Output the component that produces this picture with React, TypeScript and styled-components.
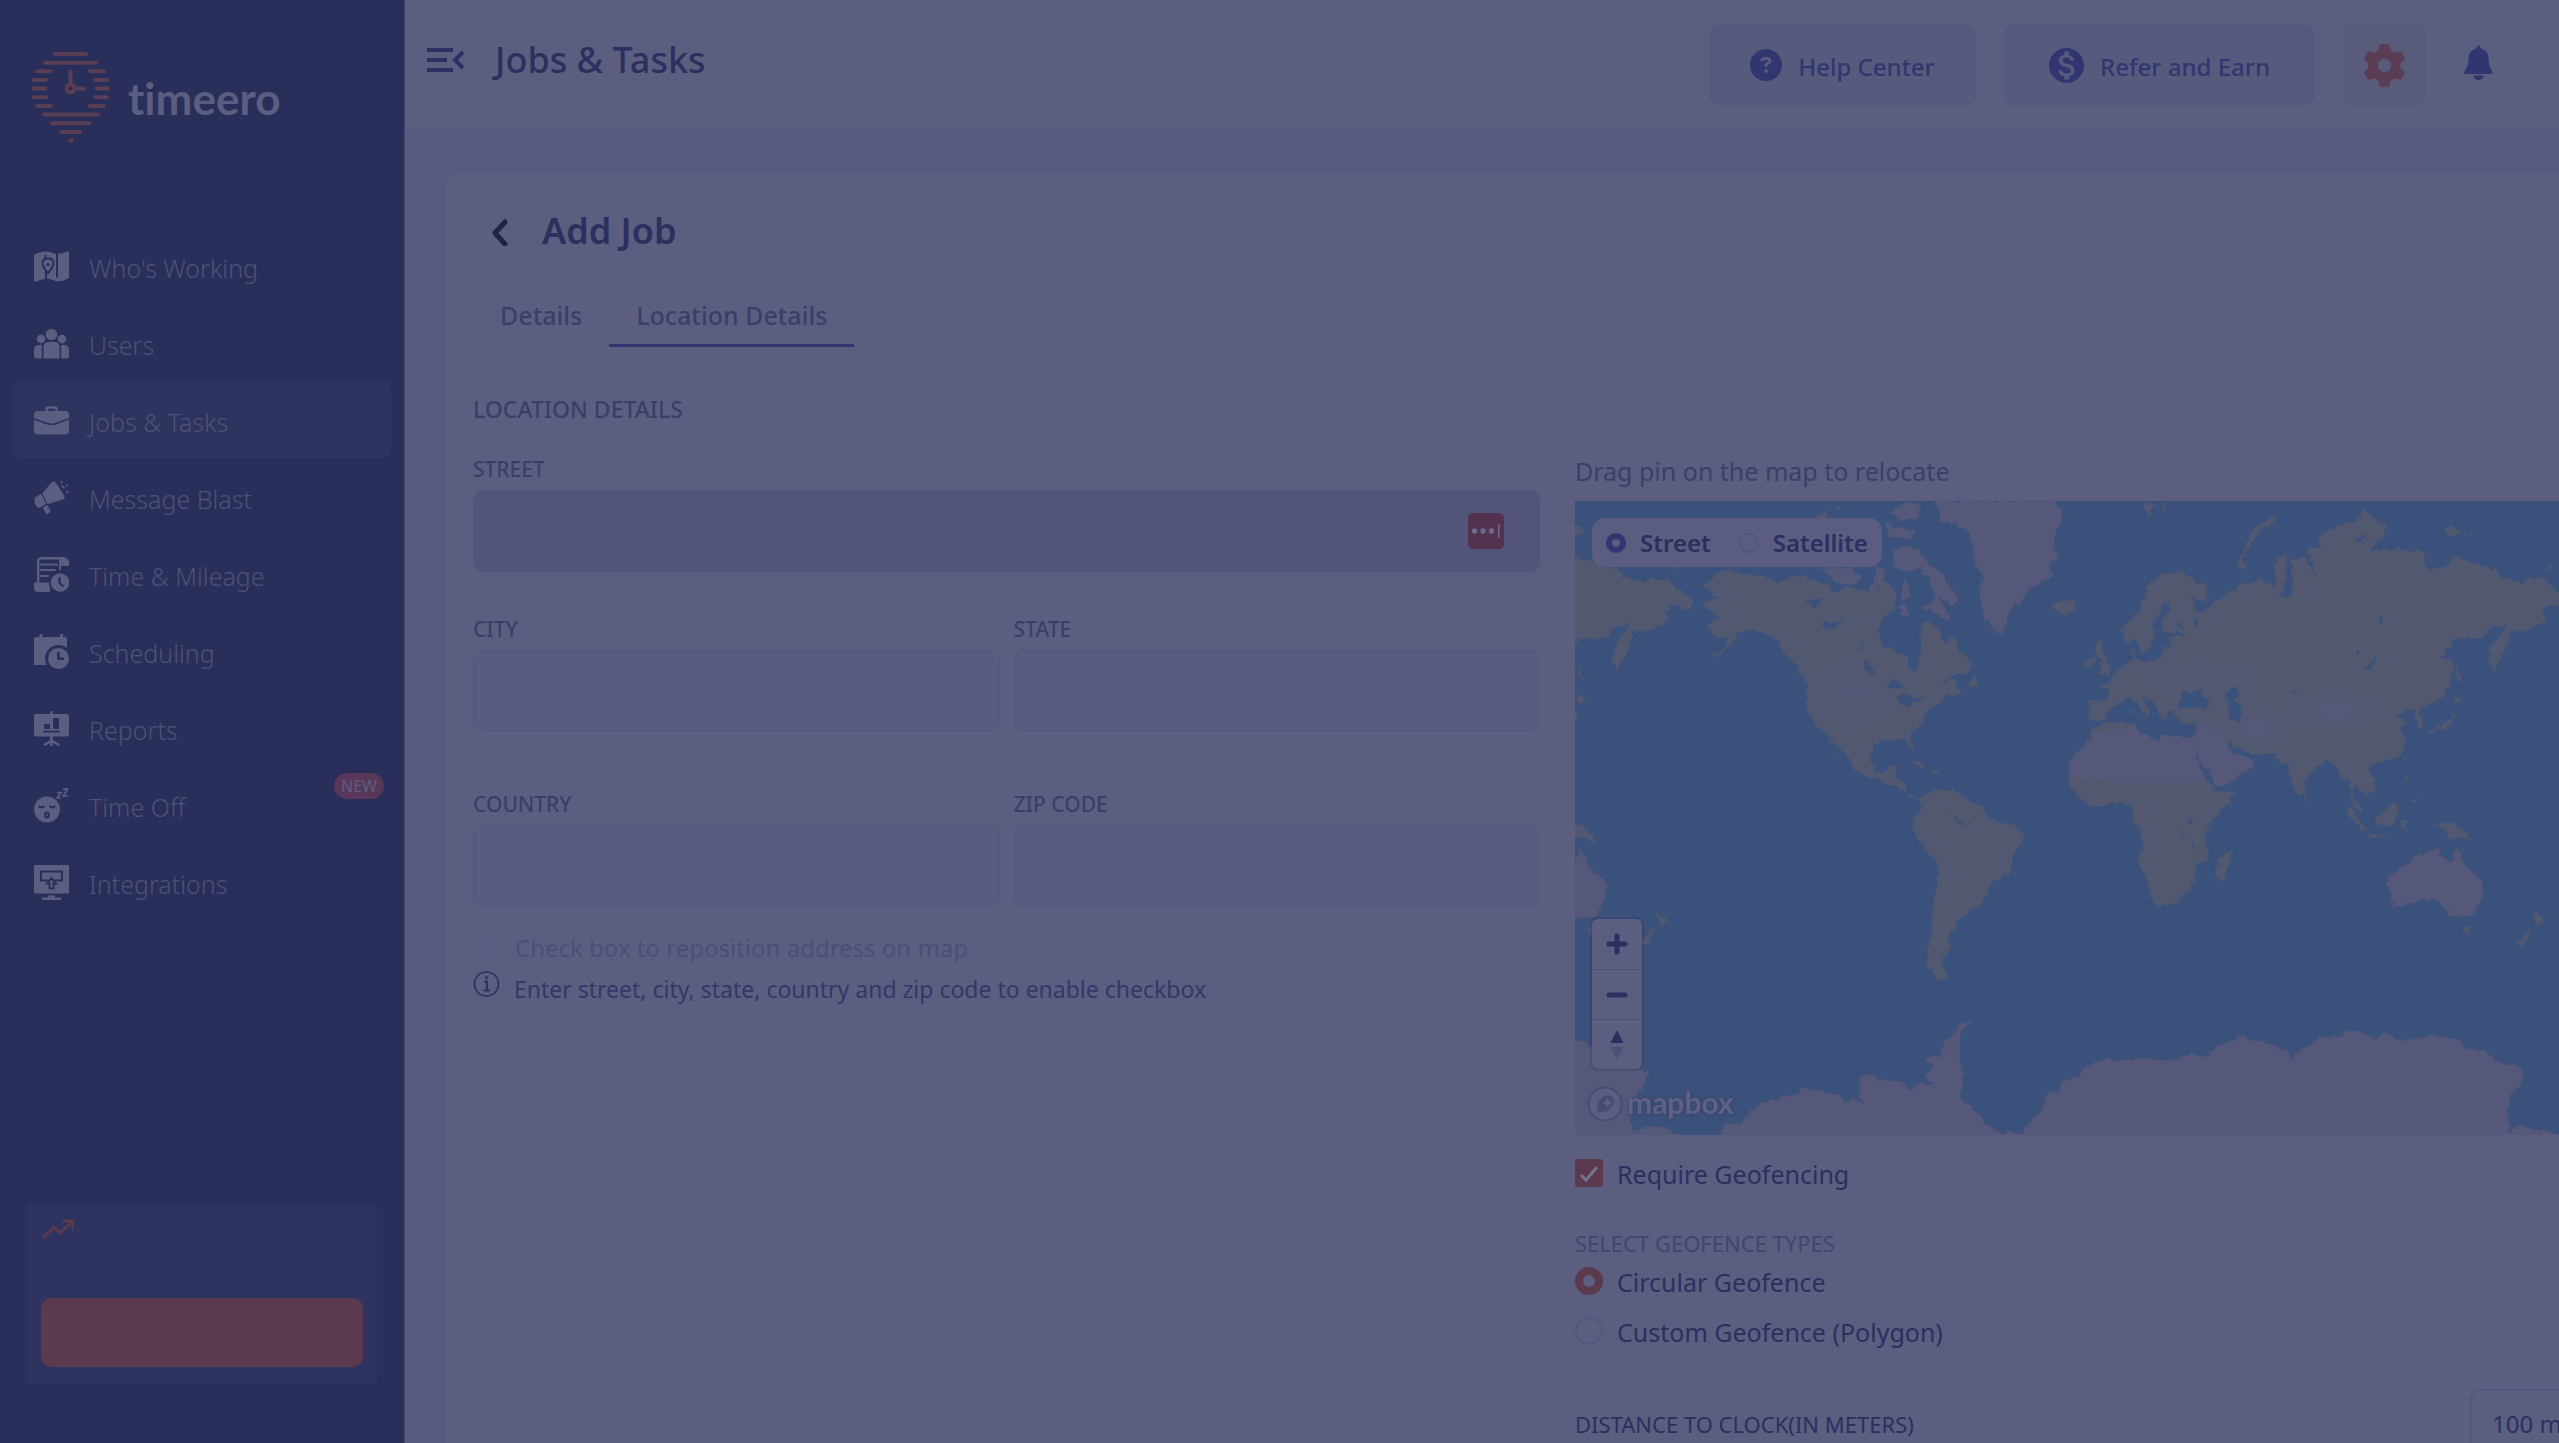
import React, { useState } from 'react';
import styled, { createGlobalStyle } from 'styled-components';
import { FaGear, FaCircleQuestion } from 'react-icons/fa6';
import { MdMonetizationOn } from 'react-icons/md';

const c = {
  sidebar: '#2a2e5a',
  sidebarActive: '#2f335f',
  sidebarEdge: '#43476c',
  sidebarText: '#4e5277',
  sidebarIcon: '#5b5e81',
  surface: '#5b5e7f',
  canvas: '#585b7f',
  field: '#595c7f',
  fieldBorder: '#56597e',
  fieldFocus: '#525579',
  ink: '#2c2f60',
  label: '#3b3e69',
  body: '#34376a',
  muted: '#4b4e77',
  accent: '#323670',
  orange: '#5c3a4d',
  water: '#3a517b',
  land: '#525870',
  sand: '#565879',
};

const GlobalStyle = createGlobalStyle`
  * { box-sizing: border-box; }
  body { margin: 0; background: ${c.canvas}; overflow: hidden; }
  body, button, input, select {
    font-family: "Noto Sans", "Open Sans", sans-serif;
    font-size: 24px;
    line-height: 32px;
  }
  button { border: 0; padding: 0; background: none; cursor: pointer; }
  svg { display: block; flex: none; }
`;

const Page = styled.div`
  display: flex;
  height: 100vh;
  overflow: hidden;
`;

/* ---------- Sidebar ---------- */

const Sidebar = styled.aside`
  display: flex;
  flex-direction: column;
  flex: none;
  width: 405px;
  background: ${c.sidebar};
  border-right: 1px solid ${c.sidebarEdge};
`;

const Brand = styled.a`
  display: flex;
  align-items: flex-start;
  gap: 18px;
  height: 227px;
  padding: 50px 0 0 31px;
  color: ${c.sidebarIcon};
  text-decoration: none;
`;

const BrandName = styled.span`
  padding-top: 18px;
  font-family: Lato, sans-serif;
  font-size: 44px;
  line-height: 60px;
  font-weight: 700;
  font-variant-ligatures: none;
`;

const Nav = styled.nav`
  display: flex;
  flex-direction: column;
  padding: 0 13px;
`;

const NavItem = styled.a<{ $active?: boolean }>`
  position: relative;
  display: flex;
  align-items: center;
  gap: 20px;
  height: 77px;
  padding: 2px 0 0 21px;
  border-radius: 6px;
  color: ${c.sidebarText};
  background: ${(p) => (p.$active ? c.sidebarActive : 'transparent')};
  text-decoration: none;

  svg { color: ${c.sidebarIcon}; }
`;

const NavLabel = styled.span`
  padding-top: 3px;
  font-size: 25px;
  font-weight: 300;
`;

const NewBadge = styled.span`
  position: absolute;
  top: 7px;
  right: 7px;
  padding: 0 7px;
  border-radius: 13px;
  background: #593759;
  color: ${c.sidebarIcon};
  font-size: 16px;
  line-height: 26px;
`;

const Promo = styled.section`
  display: flex;
  flex-direction: column;
  justify-content: space-between;
  height: 181px;
  margin: auto 27px 59px;
  padding: 16px 14px 17px;
  border-radius: 6px;
  background: ${c.sidebarActive};
`;

const PromoButton = styled.button`
  height: 69px;
  border-radius: 10px;
  background: ${c.orange};
`;

/* ---------- Header ---------- */

const Main = styled.main`
  display: flex;
  flex-direction: column;
  flex: 1;
  min-width: 0;
`;

const Header = styled.header`
  display: flex;
  align-items: center;
  justify-content: space-between;
  flex: none;
  height: 130px;
  padding: 0 66px 0 22px;
  background: ${c.surface};
`;

const HeaderSide = styled.div`
  display: flex;
  align-items: center;
  gap: 28px;
`;

const MenuButton = styled.button`
  padding-bottom: 4px;
  color: ${c.ink};
`;

const PageTitle = styled.h1`
  margin: 0;
  padding-bottom: 10px;
  color: ${c.ink};
  font-size: 36px;
  line-height: 48px;
  font-weight: 500;
`;

const PillLink = styled.a<{ $width: number }>`
  display: flex;
  align-items: center;
  justify-content: center;
  gap: 16px;
  width: ${(p) => p.$width}px;
  height: 84px;
  border-radius: 12px;
  background: #585a7d;
  color: ${c.accent};
  font-weight: 500;
  text-decoration: none;
`;

const PillLabel = styled.span`
  padding-top: 3px;
`;

const GearButton = styled.button`
  display: grid;
  place-items: center;
  width: 83px;
  height: 84px;
  border-radius: 12px;
  background: #595b7a;
  color: #5a3d55;
`;

const BellButton = styled.button`
  padding: 0 0 6px 10px;
  color: ${c.accent};
`;

/* ---------- Card ---------- */

const Card = styled.section`
  flex: 1;
  min-height: 0;
  margin: 43px 0 0 40px;
  padding: 34px 0 0 28px;
  border-top-left-radius: 10px;
  background: ${c.surface};
`;

const CardHeading = styled.div`
  display: flex;
  align-items: center;
  gap: 32px;
  padding-left: 17px;
`;

const BackButton = styled.button`
  color: #1f2245;
`;

const CardTitle = styled.h2`
  margin: 0;
  color: ${c.ink};
  font-size: 36px;
  line-height: 48px;
  font-weight: 600;
`;

const Tabs = styled.div`
  display: flex;
  margin-top: 28px;
`;

const Tab = styled.button<{ $active?: boolean }>`
  height: 64px;
  padding: 2px 27px 0;
  border-bottom: 3px solid ${(p) => (p.$active ? c.accent : 'transparent')};
  color: ${c.label};
  font-size: 25px;
  font-weight: 500;
`;

const SectionTitle = styled.h3`
  margin: 46px 0 28px;
  color: ${c.label};
  font-size: 23px;
  line-height: 32px;
  font-weight: 500;
`;

const Columns = styled.div`
  display: grid;
  grid-template-columns: minmax(0, 1067fr) minmax(0, 984fr);
  gap: 35px;
`;

const Fields = styled.div`
  display: grid;
  grid-template-columns: 1fr 1fr;
  gap: 0 14px;
  align-content: start;
`;

const Field = styled.div<{ $wide?: boolean; $after?: number }>`
  position: relative;
  display: flex;
  flex-direction: column;
  gap: 5px;
  grid-column: ${(p) => (p.$wide ? '1 / -1' : 'auto')};
  margin-bottom: ${(p) => p.$after ?? 0}px;
`;

const FieldLabel = styled.label`
  color: ${c.label};
  font-size: 21px;
  line-height: 32px;
  font-weight: 500;
`;

const TextInput = styled.input<{ $focused?: boolean }>`
  width: 100%;
  height: 82px;
  padding: 0 24px;
  border: 2px solid ${(p) => (p.$focused ? c.fieldFocus : c.fieldBorder)};
  border-radius: 10px;
  background: ${(p) => (p.$focused ? c.fieldFocus : c.field)};
  color: ${c.ink};
  outline: 0;
`;

const VaultBadge = styled.span`
  position: absolute;
  right: 36px;
  bottom: 23px;
`;

const Hint = styled.div`
  display: flex;
  gap: 14px;
  grid-column: 1 / -1;
  height: 38px;
  margin-top: 5px;
  color: ${c.body};

  svg { color: ${c.ink}; }
`;

const HintText = styled.p`
  align-self: flex-end;
  margin: 0;
  font-size: 23px;
  line-height: 34px;
`;

const Choice = styled.label<{ $before?: number; $wide?: boolean; $color?: string }>`
  display: flex;
  align-items: center;
  gap: 14px;
  grid-column: ${(p) => (p.$wide ? '1 / -1' : 'auto')};
  margin-top: ${(p) => p.$before ?? 0}px;
  color: ${(p) => p.$color ?? c.ink};
  font-size: ${(p) => (p.$wide ? 24 : 25)}px;
`;

const ChoiceText = styled.span`
  padding-top: 2px;
  line-height: 30px;
`;

const CheckBox = styled.input`
  appearance: none;
  flex: none;
  width: 28px;
  height: 28px;
  margin: 0;
  border-radius: 3px;
  background: #5a5c80;

  &:checked {
    background: ${c.orange}
      url("data:image/svg+xml,%3Csvg xmlns='http://www.w3.org/2000/svg' viewBox='0 0 28 28'%3E%3Cpath d='M6 16l5 5L22 8' fill='none' stroke='%2373738f' stroke-width='3'/%3E%3C/svg%3E");
  }
`;

const Radio = styled.input<{ $size: number; $tone: string }>`
  appearance: none;
  flex: none;
  width: ${(p) => p.$size}px;
  height: ${(p) => p.$size}px;
  margin: 0;
  border: 2px solid #54577d;
  border-radius: 50%;

  &:checked { border: ${(p) => (p.$size > 24 ? 8 : 6)}px solid ${(p) => p.$tone}; }
`;

const RightColumn = styled.div`
  display: flex;
  flex-direction: column;
  min-width: 0;
`;

const MapNote = styled.p`
  margin: 0 0 12px;
  color: ${c.label};
  font-size: 25px;
  line-height: 36px;
`;

/* ---------- Map ---------- */

const MapFrame = styled.div`
  position: relative;
  height: 634px;
  overflow: hidden;
  background: ${c.water};
`;

const MapDrawing = styled.svg`
  width: 100%;
  height: 100%;
`;

const StyleSwitch = styled.div`
  position: absolute;
  top: 17px;
  left: 17px;
  display: flex;
  align-items: center;
  gap: 28px;
  height: 49px;
  padding: 0 14px;
  border-radius: 13px;
  background: #5a5d80;
`;

const StyleOption = styled.label`
  display: flex;
  align-items: center;
  gap: 14px;
  color: ${c.ink};
  font-weight: 600;
`;

const ZoomStack = styled.div`
  position: absolute;
  left: 17px;
  bottom: 66px;
  width: 50px;
  overflow: hidden;
  border-radius: 6px;
  background: ${c.surface};
  box-shadow: 0 0 0 2px rgba(42, 46, 90, 0.25);
`;

const ZoomButton = styled.button`
  display: grid;
  place-items: center;
  width: 50px;
  height: 50px;
  color: ${c.ink};

  & + & { border-top: 1px solid #4f5278; }
`;

const MapCredit = styled.a`
  position: absolute;
  left: 12px;
  bottom: 12px;
  display: flex;
  align-items: center;
  gap: 4px;
  color: #5f6286;
  font-family: Lato, sans-serif;
  font-size: 30px;
  line-height: 36px;
  font-weight: 700;
  text-decoration: none;
  text-shadow: 0 0 2px #3f436b, 0 0 3px #3f436b;
`;

const CreditName = styled.span`
  padding-bottom: 3px;
`;

/* ---------- Geofence ---------- */

const GroupTitle = styled.legend`
  padding: 0;
  color: #42456f;
  font-size: 22px;
  line-height: 32px;
`;

const FieldSet = styled.fieldset`
  margin: 38px 0 0;
  padding: 0;
  border: 0;
`;

const DistanceRow = styled.div`
  display: flex;
  align-items: center;
  justify-content: space-between;
  width: calc(100% + 111px);
  margin-top: 42px;
`;

const DistanceLabel = styled.label`
  color: ${c.ink};
  font-size: 22px;
  font-weight: 400;
`;

const DistanceSelect = styled.select`
  appearance: none;
  width: 200px;
  height: 70px;
  padding: 0 20px;
  border: 2px solid #54577d;
  border-radius: 10px;
  background: transparent;
  color: ${c.ink};
`;

/* ---------- Drawings ---------- */

const LogoMark = () => {
  const bars: [number, number, number][] = [
    [22, 56, 4], [12, 66, 12.7], [4, 21, 21.3], [57, 74, 21.3], [1, 16, 30], [62, 77, 30],
    [0, 15, 38.6], [64, 78, 38.6], [1, 16, 47.3], [62, 77, 47.3], [4, 21, 56], [57, 74, 56],
    [11, 68, 64.6], [19, 59, 73.3], [28, 50, 82], [37, 42, 90.5],
  ];
  return (
    <svg width="79" height="95" viewBox="0 0 79 95" fill="none" stroke="#5a3e55" strokeLinecap="round" aria-hidden="true">
      {bars.map(([a, b, y]) => (
        <path key={`${a}-${y}`} d={`M${a + 2} ${y}H${b - 1}`} strokeWidth="4" />
      ))}
      <circle cx="39.5" cy="38.6" r="4" strokeWidth="4" />
      <path d="M39.5 21.5V33M46 38.6H53" strokeWidth="4" />
    </svg>
  );
};

type IconProps = { cut: string };

const MapIcon = ({ cut }: IconProps) => (
  <svg width="35" height="35" viewBox="0 0 35 35" aria-hidden="true">
    <path fill="currentColor" d="M0 5.500Q8 2 14 2.500L22 5Q28 5 33 2.800Q35 2 35 4V29Q28 32.500 23 32.500L14 29.500Q8 30 2 32.500Q0 33 0 31Z" />
    <path d="M23 5V28.500M12 21V30" stroke={cut} strokeWidth="2" />
    <path d="M14 9.500C7 9.500 6.500 16 14 24C21.500 16 21 9.500 14 9.500ZM11.500 6V10" fill="currentColor" stroke={cut} strokeWidth="2" />
    <circle cx="14" cy="15.500" r="1.600" fill={cut} />
  </svg>
);

const UsersIcon = () => (
  <svg width="35" height="35" viewBox="0 0 35 35" fill="currentColor" aria-hidden="true">
    <circle cx="17.500" cy="8.500" r="5.800" />
    <circle cx="7" cy="13" r="4.300" />
    <circle cx="28" cy="13" r="4.300" />
    <path d="M9.500 32.500V21Q9.500 16 14.500 16H20.500Q25.500 16 25.500 21V32.500ZM7.800 32.500V19H5Q0 19 0 24V30Q0 32.500 2.500 32.500ZM27.200 32.500V19H30Q35 19 35 24V30Q35 32.500 32.500 32.500Z" />
  </svg>
);

const BriefcaseIcon = ({ cut }: IconProps) => (
  <svg width="35" height="35" viewBox="0 0 35 35" aria-hidden="true">
    <rect y="8" width="35" height="23.500" rx="3.500" fill="currentColor" />
    <path d="M12.500 8V6Q12.500 4.500 14 4.500H21Q22.500 4.500 22.500 6V8" fill="none" stroke="currentColor" strokeWidth="2.400" />
    <path d="M-1 15.500L14 20.800Q17.500 22 21 20.800L36 15.500" fill="none" stroke={cut} strokeWidth="1.800" />
  </svg>
);

const MegaphoneIcon = () => (
  <svg width="35" height="35" viewBox="0 0 35 35" fill="currentColor" stroke="currentColor" strokeLinejoin="round" strokeLinecap="round" aria-hidden="true">
    <path strokeWidth="2" d="M9.500 13.500L18.500 3Q20 1.500 21 3L29.500 16.500Q30 18 28.500 18.500L14 23ZM1.500 18.500L6.500 15L11 23.500L5 27Q3 26.500 1.500 22ZM10 28L13 26.500L15.500 31.500L13 33.300Z" />
    <path strokeWidth="1.500" fill="none" d="M27.500 1.500V3M32 6L33.500 5M32.500 11.500L34 12M28 6L30 8" />
  </svg>
);

const TimesheetIcon = ({ cut }: IconProps) => (
  <svg width="35" height="35" viewBox="0 0 35 35" aria-hidden="true">
    <path d="M4.200 26V5Q4.200 1.200 8 1.200H31" fill="none" stroke="currentColor" strokeWidth="2.400" />
    <path d="M25 1H30Q35 1 35 5V9H27V13H25ZM0 25.500H16V35H4Q0 35 0 31Z" fill="currentColor" />
    <path d="M7 7.500H23M7 13H21M7 19H14" stroke="currentColor" strokeWidth="2.200" strokeLinecap="round" />
    <circle cx="26" cy="25.500" r="11" fill={cut} />
    <circle cx="26" cy="25.500" r="9.300" fill="currentColor" />
    <path d="M25.500 20V26L29.500 29.500" fill="none" stroke={cut} strokeWidth="2.200" />
  </svg>
);

const CalendarIcon = ({ cut }: IconProps) => (
  <svg width="35" height="35" viewBox="0 0 35 35" aria-hidden="true">
    <path d="M0 5Q0 3 2 3H31Q33 3 33 5V31H0Z" fill="currentColor" />
    <path d="M7 1V5M27.500 1V5" stroke="currentColor" strokeWidth="3" strokeLinecap="round" />
    <circle cx="24.500" cy="24.500" r="13.500" fill={cut} />
    <circle cx="24.500" cy="24.500" r="10.500" fill="currentColor" />
    <path d="M24.500 18V24.800H30" fill="none" stroke={cut} strokeWidth="2.600" />
  </svg>
);

const ReportsIcon = ({ cut }: IconProps) => (
  <svg width="35" height="35" viewBox="0 0 35 35" aria-hidden="true">
    <rect y="3" width="35" height="22.500" rx="2.500" fill="currentColor" />
    <path d="M17.500 1V4M17.500 25V34M11 33.500L17.500 29.500L24 33.500" fill="none" stroke="currentColor" strokeWidth="2.600" strokeLinecap="round" />
    <path d="M10 18V14Q10 13 11 13H15Q16 13 16 14V18ZM19 18V8Q19 7 20 7H24Q25 7 25 8V18ZM9 19.800H26V21.600H9Z" fill={cut} />
  </svg>
);

const SleepIcon = ({ cut }: IconProps) => (
  <svg width="35" height="35" viewBox="0 0 35 35" aria-hidden="true">
    <circle cx="13" cy="21.500" r="13" fill="currentColor" />
    <path d="M4.500 18Q7.500 20.500 10.500 18M15.500 18Q18.500 20.500 21.500 18" fill="none" stroke={cut} strokeWidth="2" />
    <ellipse cx="13" cy="27" rx="1.800" ry="2.600" fill="none" stroke={cut} strokeWidth="2" />
    <path d="M23 4.500H27L23 10H27M29 1.200H33.500L29 8H34" fill="none" stroke="currentColor" strokeWidth="1.700" />
  </svg>
);

const IntegrationsIcon = ({ cut }: IconProps) => (
  <svg width="35" height="35" viewBox="0 0 35 35" aria-hidden="true">
    <path d="M1 0H34Q35 0 35 1V28.500H0V1Q0 0 1 0ZM14 30.500H21V32.500H27V35H8V32.500H14Z" fill="currentColor" />
    <rect x="7" y="6.500" width="21" height="9" fill="none" stroke={cut} strokeWidth="2" />
    <path d="M17.500 13L13 18.500H15.500V23.500H19.500V18.500H22Z" fill="currentColor" stroke={cut} strokeWidth="2" />
  </svg>
);

const BellIcon = () => (
  <svg width="29" height="35" viewBox="0 0 29 35" fill="currentColor" aria-hidden="true">
    <path d="M13 1.500Q14.500 -1 16 1.500V3Q24.500 5 24.500 14Q24.500 22 28.500 26.500Q29.500 29 27 29H2Q-0.500 29 0.500 26.500Q4.500 22 4.500 14Q4.500 5 13 3ZM9 30.500H20Q18 35 14.500 35Q11 35 9 30.500Z" />
  </svg>
);

const land = {
  northAmerica:
    'M430 325L465 300 505 287 540 297 610 302 650 318 715 300 760 312 810 325 815 338 870 325 920 337 945 335 955 300 975 310 1010 345 1000 380 970 395 955 425 965 455 1000 465 1045 480 1050 505 1068 515 1075 490 1085 470 1078 440 1085 405 1110 403 1135 420 1140 440 1160 450 1178 432 1200 465 1242 500 1215 520 1170 522 1145 540 1185 530 1190 550 1210 560 1180 570 1165 565 1130 585 1095 605 1090 630 1050 655 1060 690 1048 685 1040 665 1000 662 940 675 932 705 945 735 975 738 990 720 1010 718 1000 750 1035 755 1035 780 1060 795 1088 790 1120 773 1190 780 1230 800 1270 812 1280 835 1320 845 1370 855 1393 880 1365 910 1350 958 1295 978 1285 1005 1255 1035 1230 1035 1228 1050 1190 1065 1185 1080 1165 1095 1168 1130 1145 1150 1165 1190 1130 1195 1105 1165 1097 1130 1115 1090 1118 1030 1135 960 1130 935 1095 910 1058 865 1062 835 1088 815 1080 798 1050 795 1025 775 985 760 930 748 880 730 870 705 840 685 812 657 835 700 845 705 800 655 765 630 742 600 742 540 715 515 710 500 680 480 655 450 630 432 570 420 530 430 520 450 480 475 440 488 500 455 510 440 470 440 440 410 480 395 450 378 425 365 470 350ZM1225 545L1240 515 1262 548ZM1045 710L1075 711 1100 727 1075 722ZM1115 730L1148 735 1115 740Z',
  arctic:
    'M1120 137L1145 160 1135 180 1180 185 1225 205 1240 230 1245 275 1270 300 1258 325 1270 390 1300 420 1330 432 1350 375 1380 362 1410 330 1485 300 1462 285 1490 260 1480 215 1500 190 1510 160 1491 150 1491 137ZM1000 245L1050 235 1080 245 1110 280 1150 300 1195 355 1180 370 1140 350 1175 405 1140 390 1085 370 1125 355 1115 320 1080 285 1030 295 1000 280ZM785 283L870 285 905 305 890 320 830 320ZM975 180L1000 195 1065 200 1060 220 990 218ZM990 165L1040 140 1080 145 1075 178 1010 178ZM950 280L975 290 965 325 945 310ZM1030 305L1052 320 1045 350 1025 355ZM768 176L800 155 800 176ZM1015 370L1030 360 1055 390 1020 388ZM820 148L845 150 835 158ZM935 320L948 310 945 335 930 335Z',
  eurasia:
    'M145 578L200 578 203 555 178 542 210 535 240 505 275 490 272 465 285 460 285 488 320 492 360 485 370 460 390 458 385 440 435 428 370 428 365 400 395 375 385 362 368 365 360 385 335 410 345 432 325 470 305 475 285 440 255 450 246 415 295 385 325 320 370 297 425 290 440 305 500 325 508 350 490 358 445 347 465 365 460 378 485 385 520 360 555 345 600 325 655 308 715 328 700 290 720 255 740 255 738 310 720 352 750 345 760 320 750 265 795 262 825 305 820 280 800 242 840 240 835 215 900 188 950 180 970 153 1000 175 1040 190 1030 215 985 248 1075 242 1115 250 1130 240 1150 250 1155 275 1170 288 1225 278 1240 258 1300 272 1375 292 1378 305 1450 318 1460 305 1511 308 1556 338 1594 358 1576 378 1531 365 1505 380 1519 400 1456 425 1410 425 1395 470 1360 515 1349 490 1352 460 1405 408 1380 415 1360 412 1325 440 1250 440 1200 485 1240 492 1232 540 1205 575 1170 583 1135 600 1152 632 1135 635 1120 600 1100 595 1072 612 1100 625 1080 635 1098 670 1085 695 1050 710 1010 715 985 730 1005 760 1005 775 980 787 955 770 940 762 935 790 965 815 965 830 945 815 930 790 928 750 905 750 880 713 848 715 820 735 795 755 795 780 778 793 760 770 742 715 725 720 700 695 650 698 610 690 560 665 580 695 610 700 640 712 640 722 590 750 530 768 515 745 455 680 490 740 530 778 582 778 570 800 500 855 495 880 505 925 468 940 465 975 440 1000 410 1025 345 1033 318 975 297 935 310 895 295 855 275 840 280 815 245 800 180 810 150 812 115 790 87 765 87 715 135 675 160 635 205 628 285 625 290 645 350 665 370 652 430 660 460 662 472 628 430 628 400 610 405 598 385 600 370 625 345 585 300 562 330 600 320 615 290 580 270 572 245 578 205 600 195 622 145 622Z',
  islands:
    'M165 450L190 445 185 465 215 505 210 520 175 520 190 505 165 470ZM140 490L165 480 160 505 135 508ZM35 362L75 358 105 358 105 378 75 390 50 380ZM590 270L610 255 635 205 660 188 710 170 700 185 650 208 610 265 622 290 600 285ZM312 150L330 137 345 140 328 175ZM360 137L380 150 370 155ZM1212 195L1230 190 1268 205 1230 215ZM1285 207L1305 212 1290 216ZM1517 285L1540 280 1535 290ZM792 785L805 795 795 803ZM908 808L940 820 980 865 960 862ZM985 871L1060 880 1000 881ZM1007 835L1070 803 1078 825 1055 857 1015 850ZM1080 842L1105 840 1095 850 1105 865 1083 860ZM1170 843L1190 848 1250 850 1280 870 1303 892 1270 880 1225 882 1215 865ZM1090 740L1102 745 1095 765ZM1112 800L1130 788 1128 803ZM1088 705L1098 700 1090 713ZM1160 650L1205 630 1225 622 1240 598 1245 610 1232 633 1200 640 1165 655ZM1240 580L1248 562 1268 577 1245 585ZM1246 495L1262 530 1250 532ZM532 930L575 907 570 930 545 978 527 970ZM1268 1078L1293 1078 1282 1095ZM1478 1040L1510 1060 1490 1078ZM1478 1080L1450 1118 1430 1115 1465 1085ZM300 617L320 618 315 623ZM270 598L278 596 276 606Z',
  australia:
    'M1040 965L1105 940 1130 915 1155 920 1180 903 1205 905 1200 922 1237 935 1250 900 1275 940 1325 975 1330 1005 1300 1055 1240 1057 1205 1030 1180 1015 1120 1022 1060 1037 1055 1015 1042 985Z',
  sahara:
    'M87 745L87 715 135 675 175 650 285 640 350 665 370 652 430 660 460 662 475 628 530 640 560 665 580 695 610 700 640 712 640 722 590 750 530 768 515 745 455 680 490 740 500 752Q300 770 87 745Z',
  lakes:
    'M412 595L430 553 450 560 490 550 480 565 515 585 495 597 450 592ZM555 560L590 548 600 560 580 575 605 592 602 625 570 620 565 600ZM970 510L1010 478 1005 495 985 512ZM440 840L460 836 455 852ZM425 855L435 885 430 885ZM455 890L467 905 463 915ZM458 400L472 402 475 420 463 418ZM410 410L430 405 428 420ZM750 555L785 552 760 562ZM1015 393L1030 393 1022 408ZM950 465L963 470 955 485ZM940 222L980 212 955 232Z',
  greatLakes:
    'M975 550L1005 530 1035 548 1000 552ZM1010 570L1040 562 1060 575 1092 573 1045 590 1020 585ZM735 357L790 348 765 375ZM780 408L850 402 815 422ZM912 495L925 490 942 512 940 525 920 515ZM895 463L908 450 900 467ZM1158 825L1215 850 1240 848 1210 857Z',
  antarctica:
    'M480 1536L495 1512 545 1510 575 1480 650 1455 715 1448 722 1430 790 1440 840 1450 855 1465 880 1455 905 1465 897 1415 905 1405 945 1403 955 1415 1020 1418 1050 1438 1080 1420 1120 1430 1095 1405 1120 1385 1095 1375 1125 1358 1145 1370 1150 1335 1185 1310 1190 1298 1240 1280 1198 1315 1200 1370 1210 1410 1200 1455 1255 1490 1290 1520 1325 1535 1350 1528 1388 1536 1400 1515 1440 1490 1465 1440 1490 1445 1505 1420 1555 1405 1580 1383 1645 1368 1655 1375 1750 1368 1825 1375 1895 1353 1930 1368 1970 1342 2015 1330 2040 1313 2065 1325 2140 1338 2185 1352 2192 1368 2275 1322 2345 1320 2352 1305 2390 1308 2450 1325 2475 1312 2515 1327 2580 1322 2620 1317 2690 1325 2730 1348 2770 1350 2825 1378 2880 1385 2893 1402 2880 1430 2855 1440 2840 1490 2850 1528 2870 1518 2950 1525 3000 1538V1600H480ZM45 1327L75 1330 95 1345 240 1390 264 1402 245 1440 215 1460 208 1500 222 1530 250 1518 310 1520 355 1536V1600H0V1327Z',
};

const OldWorld = ({ shift }: { shift: number }) => (
  <g transform={`translate(${shift} 0)`}>
    <path d={land.eurasia} fill={c.land} />
    <path d={land.islands} fill={c.land} />
    <path d={land.australia} fill={c.sand} />
    <path d={land.sahara} fill={c.sand} />
    <ellipse cx="890" cy="600" rx="180" ry="48" fill="url(#steppe)" />
    <ellipse cx="650" cy="640" rx="100" ry="56" fill="url(#steppe)" />
    <ellipse cx="480" cy="530" rx="220" ry="50" fill="url(#steppe)" opacity="0.6" />
    <path d={land.lakes} fill={c.water} />
  </g>
);

const WorldMap = () => (
  <MapDrawing viewBox="0 0 984 634" preserveAspectRatio="xMinYMin slice" role="img" aria-label="World map">
    <defs>
      <radialGradient id="steppe">
        <stop offset="0.1" stopColor={c.sand} />
        <stop offset="1" stopColor={c.sand} stopOpacity="0" />
      </radialGradient>
      <filter id="coast" x="0" y="0" width="100%" height="100%" colorInterpolationFilters="sRGB">
        <feTurbulence type="fractalNoise" baseFrequency="0.16" numOctaves="2" seed="4" />
        <feDisplacementMap in="SourceGraphic" scale="7" xChannelSelector="R" yChannelSelector="G" />
      </filter>
    </defs>
    <rect width="984" height="634" fill={c.water} />
    <g filter="url(#coast)">
      <g transform="scale(0.33333 0.4529) translate(-45 -137)">
        <path d={land.northAmerica} fill={c.land} />
        <ellipse cx="890" cy="560" rx="130" ry="90" fill="url(#steppe)" opacity="0.7" />
        <path d={land.greatLakes} fill={c.water} />
        <path d={land.arctic} fill={c.sand} />
        <OldWorld shift={1440} />
        <OldWorld shift={-1191} />
        <path d={land.antarctica} fill={c.sand} />
      </g>
    </g>
  </MapDrawing>
);

/* ---------- Page ---------- */

const navItems = [
  { label: "Who's Working", Icon: MapIcon },
  { label: 'Users', Icon: UsersIcon },
  { label: 'Jobs & Tasks', Icon: BriefcaseIcon, active: true },
  { label: 'Message Blast', Icon: MegaphoneIcon },
  { label: 'Time & Mileage', Icon: TimesheetIcon },
  { label: 'Scheduling', Icon: CalendarIcon },
  { label: 'Reports', Icon: ReportsIcon },
  { label: 'Time Off', Icon: SleepIcon, badge: 'NEW' },
  { label: 'Integrations', Icon: IntegrationsIcon },
];

export default function App() {
  const [mapStyle, setMapStyle] = useState('street');
  const [fence, setFence] = useState('circular');

  return (
    <Page>
      <GlobalStyle />
      <Sidebar>
        <Brand href="#home">
          <LogoMark />
          <BrandName>timeero</BrandName>
        </Brand>
        <Nav>
          {navItems.map(({ label, Icon, active, badge }) => (
            <NavItem key={label} href="#nav" $active={active}>
              <Icon cut={active ? c.sidebarActive : c.sidebar} />
              <NavLabel>{label}</NavLabel>
              {badge && <NewBadge>{badge}</NewBadge>}
            </NavItem>
          ))}
        </Nav>
        <Promo>
          <svg width="33" height="20" viewBox="0 0 33 20" fill="none" stroke={c.orange} strokeWidth="3" strokeLinecap="round" aria-hidden="true">
            <path d="M3 18L13 8L19 14L31 3M23 2H32V10" />
          </svg>
          <PromoButton aria-label="Upgrade" />
        </Promo>
      </Sidebar>

      <Main>
        <Header>
          <HeaderSide>
            <MenuButton aria-label="Collapse menu">
              <svg width="40" height="38" viewBox="0 0 40 38" fill="none" stroke="currentColor" strokeWidth="4" aria-hidden="true">
                <path d="M0 6H26M0 16H20M0 26H26M36 8L28 16L36 24" />
              </svg>
            </MenuButton>
            <PageTitle>Jobs &amp; Tasks</PageTitle>
          </HeaderSide>
          <HeaderSide>
            <PillLink href="#help" $width={267}>
              <FaCircleQuestion size={32} />
              <PillLabel>Help Center</PillLabel>
            </PillLink>
            <PillLink href="#refer" $width={311}>
              <MdMonetizationOn size={35} viewBox="2 2 20 20" />
              <PillLabel>Refer and Earn</PillLabel>
            </PillLink>
            <GearButton aria-label="Settings">
              <FaGear size={43} />
            </GearButton>
            <BellButton aria-label="Notifications">
              <BellIcon />
            </BellButton>
          </HeaderSide>
        </Header>

        <Card>
          <CardHeading>
            <BackButton aria-label="Back">
              <svg width="20" height="30" viewBox="0 0 20 30" fill="none" stroke="currentColor" strokeWidth="5" strokeLinecap="round" strokeLinejoin="round" aria-hidden="true">
                <path d="M15 6L5 17L15 28" />
              </svg>
            </BackButton>
            <CardTitle>Add Job</CardTitle>
          </CardHeading>
          <Tabs>
            <Tab>Details</Tab>
            <Tab $active>Location Details</Tab>
          </Tabs>
          <SectionTitle>LOCATION DETAILS</SectionTitle>

          <Columns>
            <Fields>
              <Field $wide $after={41}>
                <FieldLabel htmlFor="street">STREET</FieldLabel>
                <TextInput id="street" $focused />
                <VaultBadge>
                  <svg width="36" height="36" viewBox="0 0 36 36" aria-hidden="true">
                    <rect width="36" height="36" rx="5" fill="#53324f" />
                    <g fill="#6a6c90">
                      <circle cx="6.500" cy="18" r="2.700" />
                      <circle cx="15" cy="18" r="2.700" />
                      <circle cx="23.500" cy="18" r="2.700" />
                      <rect x="30" y="11" width="1.500" height="14" />
                    </g>
                  </svg>
                </VaultBadge>
              </Field>
              <Field $after={56}>
                <FieldLabel htmlFor="city">CITY</FieldLabel>
                <TextInput id="city" />
              </Field>
              <Field $after={56}>
                <FieldLabel htmlFor="state">STATE</FieldLabel>
                <TextInput id="state" />
              </Field>
              <Field>
                <FieldLabel htmlFor="country">COUNTRY</FieldLabel>
                <TextInput id="country" />
              </Field>
              <Field>
                <FieldLabel htmlFor="zip">ZIP CODE</FieldLabel>
                <TextInput id="zip" />
              </Field>
              <Choice $before={24} $wide $color={c.muted}>
                <CheckBox type="checkbox" disabled />
                <ChoiceText>Check box to reposition address on map</ChoiceText>
              </Choice>
              <Hint>
                <svg width="27" height="32" viewBox="0 0 27 32" fill="none" stroke="currentColor" aria-hidden="true">
                  <circle cx="13.500" cy="16" r="12" strokeWidth="1.600" />
                  <path d="M11 13.500H14V22.500M10.500 22.500H17" strokeWidth="1.800" />
                  <circle cx="13.500" cy="9.500" r="1.500" fill="currentColor" stroke="none" />
                </svg>
                <HintText>Enter street, city, state, country and zip code to enable checkbox</HintText>
              </Hint>
            </Fields>

            <RightColumn>
              <MapNote>Drag pin on the map to relocate</MapNote>
              <MapFrame>
                <WorldMap />
                <StyleSwitch>
                  <StyleOption>
                    <Radio type="radio" name="map-style" $size={20} $tone={c.accent} checked={mapStyle === 'street'} onChange={() => setMapStyle('street')} />
                    Street
                  </StyleOption>
                  <StyleOption>
                    <Radio type="radio" name="map-style" $size={20} $tone={c.accent} checked={mapStyle === 'satellite'} onChange={() => setMapStyle('satellite')} />
                    Satellite
                  </StyleOption>
                </StyleSwitch>
                <ZoomStack>
                  <ZoomButton aria-label="Zoom in">
                    <svg width="22" height="22" viewBox="0 0 22 22" stroke="currentColor" strokeWidth="5" strokeLinecap="round" aria-hidden="true">
                      <path d="M3 11H19M11 3V19" />
                    </svg>
                  </ZoomButton>
                  <ZoomButton aria-label="Zoom out">
                    <svg width="22" height="22" viewBox="0 0 22 22" stroke="currentColor" strokeWidth="5" strokeLinecap="round" aria-hidden="true">
                      <path d="M3 11H19" />
                    </svg>
                  </ZoomButton>
                  <ZoomButton aria-label="Reset north">
                    <svg width="14" height="30" viewBox="0 0 14 30" fill="currentColor" aria-hidden="true">
                      <path d="M7 0L13.500 13H0.500Z" />
                      <path d="M7 30L13.500 17H0.500Z" fill="#4d5077" />
                    </svg>
                  </ZoomButton>
                </ZoomStack>
                <MapCredit href="#mapbox">
                  <svg width="36" height="36" viewBox="0 0 36 36" aria-hidden="true">
                    <circle cx="18" cy="18" r="16.500" fill="#5b5e80" stroke="#484b72" strokeWidth="2" />
                    <path d="M10.500 25.500C9 13 16 9.500 21 9.500C26 9.500 28 14 26.500 18C24.500 25 17 27 10.500 25.500Z" fill="#484b72" />
                    <path d="M20.500 11.500L22 15.300L25.800 16.800L22 18.300L20.500 22L19 18.300L15.200 16.800L19 15.300Z" fill="#5f6286" />
                  </svg>
                  <CreditName>mapbox</CreditName>
                </MapCredit>
              </MapFrame>

              <Choice $before={22}>
                <CheckBox type="checkbox" defaultChecked />
                <ChoiceText>Require Geofencing</ChoiceText>
              </Choice>
              <FieldSet>
                <GroupTitle>SELECT GEOFENCE TYPES</GroupTitle>
                <Choice $before={6}>
                  <Radio type="radio" name="fence" $size={28} $tone={c.orange} checked={fence === 'circular'} onChange={() => setFence('circular')} />
                  <ChoiceText>Circular Geofence</ChoiceText>
                </Choice>
                <Choice $before={18}>
                  <Radio type="radio" name="fence" $size={28} $tone={c.orange} checked={fence === 'polygon'} onChange={() => setFence('polygon')} />
                  <ChoiceText>Custom Geofence (Polygon)</ChoiceText>
                </Choice>
              </FieldSet>
              <DistanceRow>
                <DistanceLabel htmlFor="distance">DISTANCE TO CLOCK(IN METERS)</DistanceLabel>
                <DistanceSelect id="distance" defaultValue="100">
                  <option value="100">100 meters</option>
                </DistanceSelect>
              </DistanceRow>
            </RightColumn>
          </Columns>
        </Card>
      </Main>
    </Page>
  );
}
